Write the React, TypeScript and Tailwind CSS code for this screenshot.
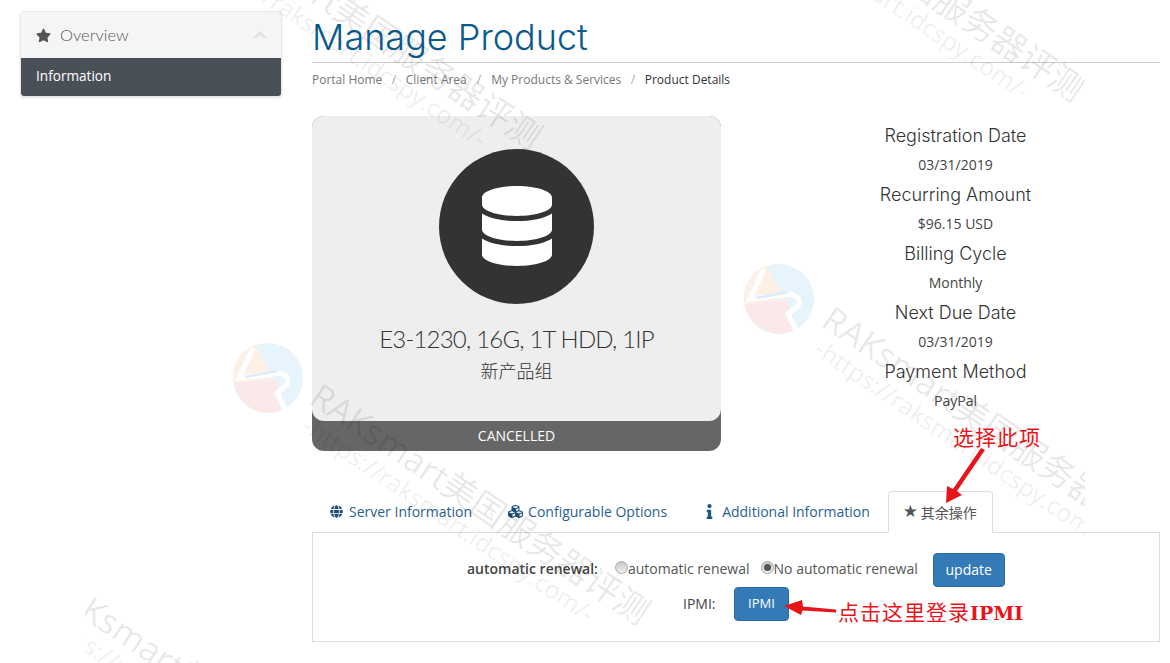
import { FaStar, FaGlobe, FaCubes, FaInfo, FaDatabase, FaChevronUp } from "react-icons/fa";

const sans = "font-['Open_Sans','Noto_Sans_CJK_SC',sans-serif]";

function Watermark({ x, y }: { x: number; y: number }) {
  return (
    <div className="absolute whitespace-nowrap origin-top-left rotate-[34deg]" style={{ left: x, top: y }}>
      <div className="text-[34.5px] leading-[40px] font-['Open_Sans','Noto_Sans_CJK_SC',sans-serif] text-[#000]/[0.09]">RAKsmart美国服务器评测</div>
      <div className="text-[24.5px] leading-[26px] ml-[10px] -mt-[2px] font-['Open_Sans',sans-serif] text-[#000]/[0.08]">-https://raksmart.idcspy.com/-</div>
    </div>
  );
}

function Logo({ x, y }: { x: number; y: number }) {
  return (
    <svg className="absolute" style={{ left: x, top: y }} width="70" height="70" viewBox="0 0 70 70">
      <circle cx="35" cy="35" r="35" fill="#e8f4fb" />
      <path d="M22 1.5A35 35 0 0 0 1 44L40 34Z" fill="#fdf1e6" />
      <path d="M1 40A35 35 0 0 0 48 67.5L44 36Z" fill="#fbe9e9" />
      <path d="M20 5L6 35L46 30Q58 33 54 42L44 50L52 66" fill="none" stroke="#fff" strokeWidth="5" />
      <path d="M12 34L44 28" fill="none" stroke="#d9edfa" strokeWidth="2.5" />
    </svg>
  );
}

function Detail({ title, value }: { title: string; value: string }) {
  return (
    <div className="flex flex-col items-center h-[59px]">
      <div className="text-[18px] leading-[26px] mt-[7px] text-[#333] font-['Inter',sans-serif] font-light">{title}</div>
      <div className="text-[14px] leading-[20px] mt-[6px] text-[#444]">{value}</div>
    </div>
  );
}

function Radio({ on }: { on?: boolean }) {
  return (
    <span className="inline-flex items-center justify-center w-[13px] h-[13px] -mt-[3px] rounded-full border border-[#a9a9a9] bg-gradient-to-b from-[#c8c8c8] to-[#eeeeee]">
      {on && <span className="w-[7px] h-[7px] rounded-full bg-[#555]" />}
    </span>
  );
}

export default function App() {
  return (
    <div className={`relative w-[1170px] h-[663px] overflow-hidden bg-white ${sans}`}>
      <div className="flex gap-[30px] pl-5 pt-[11px]">
        <aside className="w-[262px] shrink-0">
          <div className="rounded-[4px] border border-[#e8e8e8] overflow-hidden shadow-[0_1px_2px_rgba(0,0,0,0.12)]">
            <div className="h-[46px] bg-[#f5f5f5] flex items-center pl-[15px] pr-[14px]">
              <FaStar className="text-[#555] text-[15px] mr-[9px]" />
              <span className="text-[16.5px] text-[#58595b] font-['Lato',sans-serif] font-light">Overview</span>
              <FaChevronUp className="ml-auto text-[#e0e0e0] text-[14px]" />
            </div>
            <div className="h-[38px] bg-[#495057] flex items-center pl-[15px] pb-[2px] text-[13.6px] text-white">Information</div>
          </div>
        </aside>

        <main className="w-[848px] shrink-0">
          <h1 className="h-[53px] border-b border-[#ccc] text-[36px] leading-[54px] text-[#0a5a8c] font-['Inter',sans-serif] font-light -mt-[1px]">Manage Product</h1>
          <nav className="flex items-center h-[18px] mt-[8px] text-[12px] text-[#777]">
            <span>Portal Home</span>
            <span className="mx-[9.5px] text-[#aaa]">/</span>
            <span>Client Area</span>
            <span className="mx-[10px] text-[#aaa]">/</span>
            <span>My Products &amp; Services</span>
            <span className="mx-[9.5px] text-[#aaa]">/</span>
            <span className="text-[#333]">Product Details</span>
          </nav>

          <section className="flex mt-[27px]">
            <div className="w-[409px] h-[335px] rounded-[12px] bg-[#666] overflow-hidden flex flex-col">
              <div className="h-[305px] rounded-b-[12px] bg-[#eee] flex flex-col items-center pt-[33px]">
                <div className="w-[155px] h-[155px] pb-[2px] rounded-full bg-[#333] flex items-center justify-center">
                  <FaDatabase className="text-white text-[80px]" />
                </div>
                <div className="mt-[20px] text-[24px] leading-[30px] tracking-[-0.8px] text-[#333] font-['Lato',sans-serif] font-light">E3-1230, 16G, 1T HDD, 1IP</div>
                <div className="mt-[4px] text-[18px] leading-[26px] text-[#333] font-light">新产品组</div>
              </div>
              <div className="h-[30px] pb-[2px] flex items-center justify-center text-[14px] text-white">CANCELLED</div>
            </div>
            <div className="ml-[30px] w-[409px] flex flex-col">
              <Detail title="Registration Date" value="03/31/2019" />
              <Detail title="Recurring Amount" value="$96.15 USD" />
              <Detail title="Billing Cycle" value="Monthly" />
              <Detail title="Next Due Date" value="03/31/2019" />
              <Detail title="Payment Method" value="PayPal" />
            </div>
          </section>

          <div className="flex items-end h-[42px] mt-[39px] text-[14px] text-[#285f8f]">
            <div className="flex items-center h-[41px] px-[18px]"><FaGlobe className="text-[13px] text-[#1a4f7a] mr-[6px]" />Server Information</div>
            <div className="flex items-center h-[41px] px-[18px]"><FaCubes className="text-[15px] text-[#1a4f7a] mr-[5px]" />Configurable Options</div>
            <div className="flex items-center h-[41px] pl-[17px] pr-[18px]"><FaInfo className="text-[15px] text-[#1a5c85] mr-[5px]" />Additional Information</div>
            <div className="relative z-10 flex items-center h-[42px] -mb-px pl-[14px] pr-[15px] border border-[#ddd] border-b-white bg-white rounded-t-[4px] text-[#555]">
              <span className="w-[14px] text-[17px] leading-none mr-[4px] -mt-[2px] font-['DejaVu_Sans',sans-serif]">★</span>
              <span>其余操作</span>
            </div>
          </div>
          <div className="h-[110px] border border-[#ddd] text-[14px] text-[#555] flex flex-col">
            <div className="flex items-start h-[34px] mt-[20px]">
              <span className="ml-[154px] mt-[6px] leading-[20px] font-semibold text-[#444]">automatic renewal:</span>
              <span className="ml-[17px] mt-[6px] leading-[20px] flex items-center"><Radio />automatic renewal</span>
              <span className="ml-[11px] mt-[6px] leading-[20px] flex items-center"><Radio on />No automatic renewal</span>
              <button className="ml-[15px] w-[72px] h-[34px] pb-[2px] rounded-[4px] bg-[#337ab7] border border-[#2e6da4] text-white">update</button>
            </div>
            <div className="flex items-center h-[34px]">
              <span className="ml-[370px] w-[34px] pb-[2px] text-[#444]">IPMI:</span>
              <button className="ml-[17px] w-[55px] h-[34px] rounded-[4px] bg-[#337ab7] border border-[#2e6da4] text-white text-[13px]">IPMI</button>
            </div>
          </div>
        </main>
      </div>

      <div className="absolute z-20 left-[85px] top-0 w-[1000px] h-[663px] overflow-hidden pointer-events-none">
        <Logo x={148} y={343} />
        <Logo x={659} y={264} />
        <Watermark x={241} y={375} />
        <Watermark x={753} y={298} />
        <Watermark x={133} y={-100} />
        <Watermark x={676} y={-148} />
        <Watermark x={-24} y={564} />
      </div>

      <div className="absolute z-20 left-[953px] top-[423px] text-[21px] leading-[26px] text-[#e8141c] font-['Noto_Sans_CJK_SC',sans-serif] tracking-[1px]">选择此项</div>
      <div className="absolute z-20 left-[838px] top-[598px] text-[21px] leading-[26px] text-[#e8141c] whitespace-nowrap font-['Noto_Sans_CJK_SC',sans-serif] tracking-[1px]">点击这里登录<span className="font-bold tracking-normal text-[19px] font-['DejaVu_Serif',serif]">IPMI</span></div>

      <svg className="absolute z-20 left-0 top-0 pointer-events-none" width="1170" height="663" viewBox="0 0 1170 663" fill="#e8141c">
        <path d="M981 448L985 450L957 491L962 495L946 503L947 486L953 489Z" />
        <path d="M836 609.5L836 612.5L802.500 610.500L801 615L784 606L802 600L803 606.500Z" />
      </svg>
    </div>
  );
}
